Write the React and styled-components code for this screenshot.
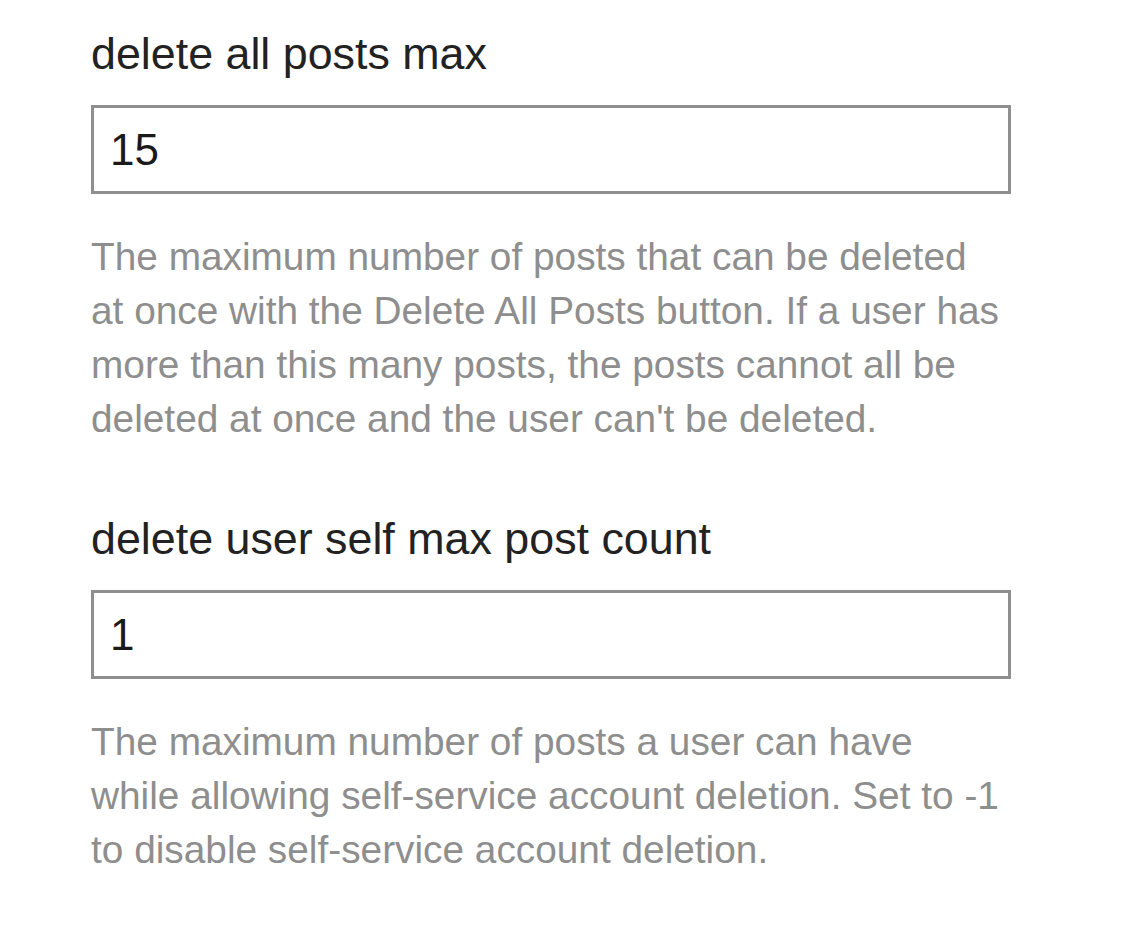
import styled, { createGlobalStyle } from "styled-components";

const GlobalStyle = createGlobalStyle`
  html, body {
    margin: 0;
    padding: 0;
    background: #ffffff;
  }
  body {
    font-family: "Liberation Sans", Arial, sans-serif;
  }
`;

const StyledPage = styled.div`
  padding: 28px 0 40px 91px;
  display: flex;
  flex-direction: column;
  gap: 67px;
`;

const StyledSetting = styled.div`
  display: flex;
  flex-direction: column;
  width: 920px;
`;

const StyledLabel = styled.label`
  font-size: 44.8px;
  line-height: 50px;
  color: #222222;
  margin: 0 0 27px;
`;

const StyledInput = styled.input`
  box-sizing: border-box;
  width: 920px;
  height: 89px;
  border: 3px solid #8f8f8f;
  border-radius: 0;
  padding: 0 16px;
  font-family: "Liberation Sans", Arial, sans-serif;
  font-size: 44px;
  color: #1a1a1a;
  background: #fff;
  outline: none;
`;

const StyledHelp = styled.p`
  margin: 36px 0 0;
  max-width: 913px;
  font-size: 38.8px;
  line-height: 54px;
  color: #8e8e8e;
`;

const settings = [
  {
    id: "delete_all_posts_max",
    label: "delete all posts max",
    value: "15",
    help:
      "The maximum number of posts that can be deleted at once with the Delete All Posts button. If a user has more than this many posts, the posts cannot all be deleted at once and the user can't be deleted.",
  },
  {
    id: "delete_user_self_max_post_count",
    label: "delete user self max post count",
    value: "1",
    help:
      "The maximum number of posts a user can have while allowing self-service account deletion. Set to -1 to disable self-service account deletion.",
  },
];

export default function App() {
  return (
    <>
      <GlobalStyle />
      <StyledPage>
        {settings.map((s) => (
          <StyledSetting key={s.id}>
            <StyledLabel htmlFor={s.id}>{s.label}</StyledLabel>
            <StyledInput id={s.id} type="text" defaultValue={s.value} />
            <StyledHelp>{s.help}</StyledHelp>
          </StyledSetting>
        ))}
      </StyledPage>
    </>
  );
}
